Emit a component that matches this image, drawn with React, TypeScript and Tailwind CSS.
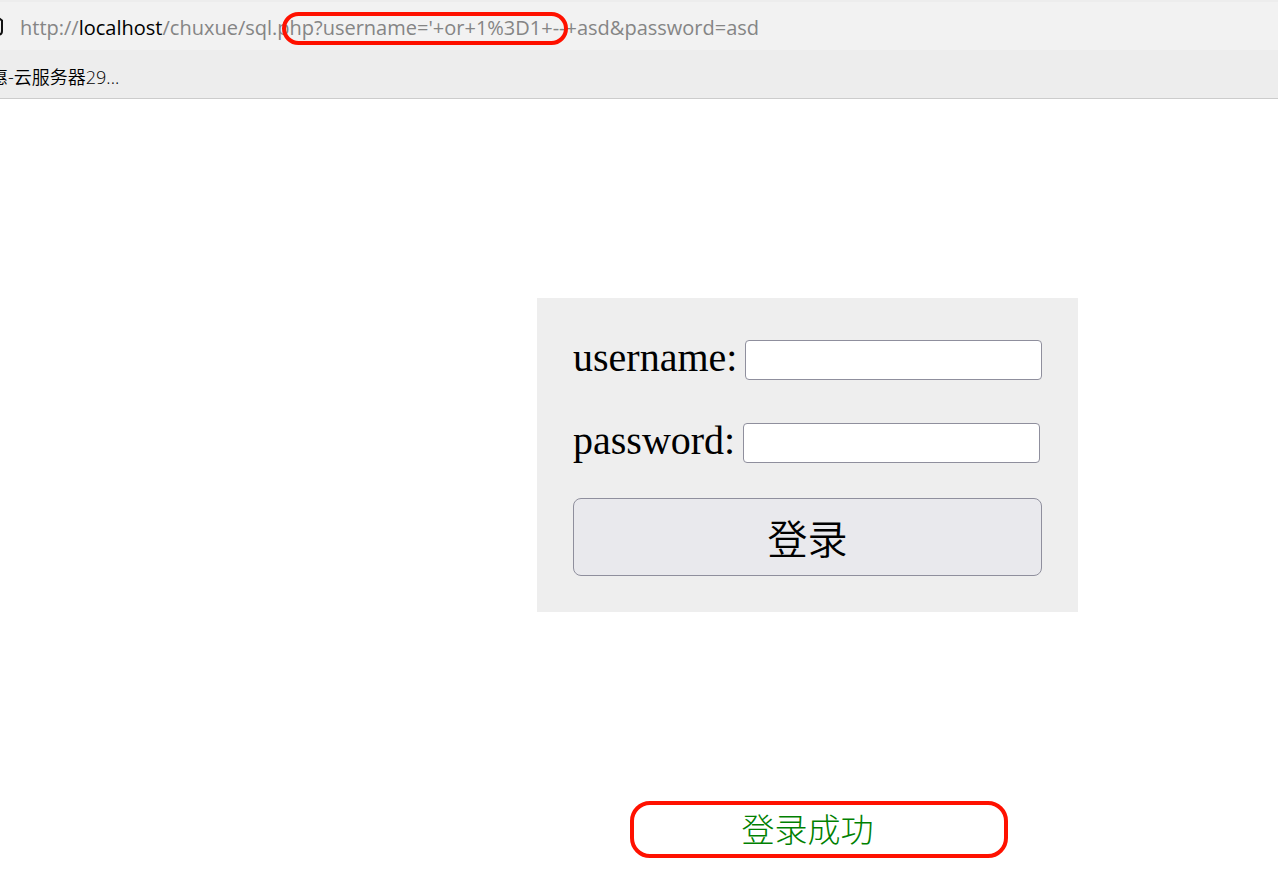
import { useId } from 'react';

function AddressBar() {
  return (
    <div className="relative mt-0.5 flex h-12 items-center overflow-hidden bg-[#f2f2f2] whitespace-nowrap">
      <svg
        className="h-5 w-5 shrink-0 -ml-4"
        viewBox="0 0 20 20"
        fill="none"
        stroke="#111111"
        strokeWidth="2"
        aria-hidden="true"
      >
        <path d="M2 3.500 L4 1 H13.500 L18 4.500 V15 Q18 18.500 15 18.500 H4 Q2 18.500 2 15 Z" />
      </svg>
      <div
        role="textbox"
        aria-label="Address"
        className="ml-4 pt-1 font-['Open_Sans','Noto_Sans',sans-serif] text-[20px] leading-8 text-[#858585]"
      >
        http://<span className="text-black">localhost</span>
        /chuxue/sql.php?username='+or+1%3D1+--+asd&amp;password=asd
      </div>
      <span className="pointer-events-none absolute top-2.5 left-[282px] h-[33px] w-[286px] rounded-full border-4 border-[#ff1100]" />
    </div>
  );
}

function BookmarksBar() {
  return (
    <nav className="flex h-[49px] items-center overflow-hidden border-b border-[#cccccc] pt-1.5">
      <a
        href="#bookmark"
        className="-ml-2.5 font-['Open_Sans','Noto_Sans_CJK_SC',sans-serif] text-[18px] leading-6 font-[350] whitespace-nowrap text-black"
      >
        惠-云服务器29...
      </a>
    </nav>
  );
}

function Field({ name, type }: { name: string; type: string }) {
  const id = useId();
  return (
    <div className="flex items-center gap-2">
      <label htmlFor={id} className="text-[40px] leading-10">
        {name}:
      </label>
      <input
        id={id}
        name={name}
        type={type}
        className="mt-1 h-10 w-[297px] rounded border border-[#8f8f9d] bg-white px-1 text-2xl"
      />
    </div>
  );
}

export default function App() {
  return (
    <div className="min-h-screen bg-white font-['Liberation_Serif','Noto_Sans_CJK_SC',serif] text-black">
      <header className="flex flex-col bg-[#ededed]">
        <AddressBar />
        <BookmarksBar />
      </header>
      <main className="flex flex-col items-center pt-[199px] pl-[337px]">
        <form
          className="flex w-[541px] flex-col bg-[#eeeeee] px-9 pt-[38px] pb-9"
          onSubmit={(event) => event.preventDefault()}
        >
          <div className="flex flex-col gap-[39px]">
            <Field name="username" type="text" />
            <Field name="password" type="password" />
          </div>
          <button
            type="submit"
            className="mt-[35px] h-[78px] rounded-lg border border-[#8f8f9d] bg-[#e9e9ed] font-['Noto_Sans_CJK_SC',sans-serif] text-[40px] leading-none font-[350]"
          >
            登录
          </button>
        </form>
        <div className="relative mt-[189px] flex h-[57px] items-center justify-center pb-1">
          <p className="font-['Noto_Sans_CJK_SC',sans-serif] text-[33px] leading-10 font-light text-[#008000]">登录成功</p>
          <span className="pointer-events-none absolute top-0 -left-[112px] h-[57px] w-[378px] rounded-[20px] border-4 border-[#ff1100]" />
        </div>
      </main>
    </div>
  );
}
